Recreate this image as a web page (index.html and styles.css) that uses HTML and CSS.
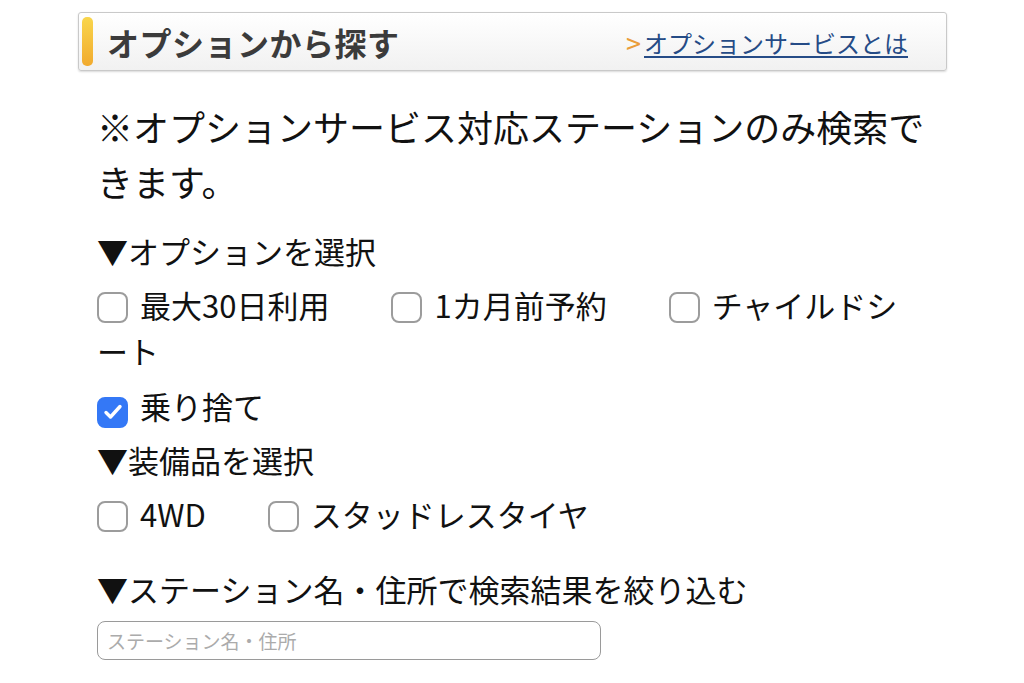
FILE: index.html
```html
<!DOCTYPE html>
<html lang="ja">
<head>
  <meta charset="UTF-8" />
  <meta name="viewport" content="width=device-width, initial-scale=1" />
  <title>オプションから探す</title>
  <link rel="stylesheet" href="styles.css">
</head>
<body>

  <div class="page">
    <div class="section-head">
      <h2 class="section-title">オプションから探す</h2>
      <div class="section-link"><span class="arrow">&gt;</span><a href="#">オプションサービスとは</a></div>
    </div>

    <div class="body">
      <p class="note">※オプションサービス対応ステーションのみ検索できます。</p>

      <h3 class="label-head">▼オプションを選択</h3>
      <p class="options">
        <label class="opt"><span class="cb"></span>最大30日利用</label><label class="opt"><span class="cb"></span>1カ月前予約</label><label class="opt"><span class="cb"></span>チャイルドシート</label>
      </p>
      <p class="options">
        <label class="opt"><span class="cb checked"><svg viewBox="0 0 24 24" width="24" height="24"><path d="M5 12.5l4.5 4.5L19 6.5" fill="none" stroke="#fff" stroke-width="3.4" stroke-linecap="round" stroke-linejoin="round"/></svg></span>乗り捨て</label>
      </p>

      <h3 class="label-head">▼装備品を選択</h3>
      <p class="options">
        <label class="opt"><span class="cb"></span>4WD</label><label class="opt"><span class="cb"></span>スタッドレスタイヤ</label>
      </p>

      <h3 class="label-head spaced">▼ステーション名・住所で検索結果を絞り込む</h3>
      <input class="search" type="text" placeholder="ステーション名・住所">
    </div>
  </div>

</body>
</html>
```

FILE: styles.css
```css
* {
  margin: 0;
  padding: 0;
  box-sizing: border-box;
}

html, body {
  width: 100%;
  height: 100%;
  background: #fff;
  color: #111;
  font-family: "Noto Sans CJK JP", "Noto Sans", sans-serif;
  overflow: hidden;
}

.page {
  width: 869px;
  margin: 12px 0 0 78px;
}

.section-head {
  height: 59px;
  border: 1.5px solid #c9c9c9;
  border-radius: 3px;
  background: linear-gradient(#ffffff, #f1f1f1);
  box-shadow: 0 1px 2px rgba(0,0,0,0.15);
  display: flex;
  align-items: center;
  justify-content: space-between;
  padding: 0 38px 0 3px;
}

.section-title {
  display: flex;
  align-items: center;
  font-size: 32px;
  font-weight: bold;
  color: #3b3b3b;
  letter-spacing: 0.5px;
}

.section-title::before {
  content: "";
  width: 11px;
  height: 49px;
  border-radius: 5px;
  margin-right: 14px;
  background: linear-gradient(#f9d64c, #f1aa2e);
}

.section-link {
  font-size: 24px;
  display: flex;
  align-items: center;
  padding-top: 2px;
}

.section-link .arrow {
  color: #ea9d3a;
  font-size: 27px;
  margin-right: 3px;
}

.section-link a {
  color: #254b86;
  text-decoration: underline;
  text-underline-offset: 3px;
}

.body {
  padding: 0 20px 0 19px;
  line-break: loose;
}

.note {
  font-size: 36px;
  line-height: 55px;
  margin-top: 28px;
  color: #111;
}

.label-head {
  font-size: 31px;
  font-weight: normal;
  line-height: 46px;
  margin-top: 19px;
}

.options {
  font-size: 31px;
  line-height: 46px;
  margin-top: 9px;
}

.label-head + .options {
  margin-top: 8px;
}

.options + .label-head {
  margin-top: 8px;
}

.options + .label-head.spaced {
  margin-top: 29px;
}

.opt {
  margin-right: 62px;
}

.cb {
  display: inline-flex;
  align-items: center;
  justify-content: center;
  width: 31px;
  height: 31px;
  border: 2.5px solid #9c9c9c;
  border-radius: 8px;
  margin-right: 12px;
  vertical-align: -5px;
  background: #fff;
}

.cb.checked {
  background: #3478f6;
  border-color: #3478f6;
}

.search {
  display: block;
  width: 504px;
  height: 39px;
  margin-top: 9px;
  border: 1.5px solid #9a9a9a;
  border-radius: 8px;
  padding: 0 9px;
  font-family: "Noto Sans CJK JP", "Noto Sans", sans-serif;
  font-size: 19px;
  color: #333;
}

.search::placeholder {
  color: #ababab;
}
```
